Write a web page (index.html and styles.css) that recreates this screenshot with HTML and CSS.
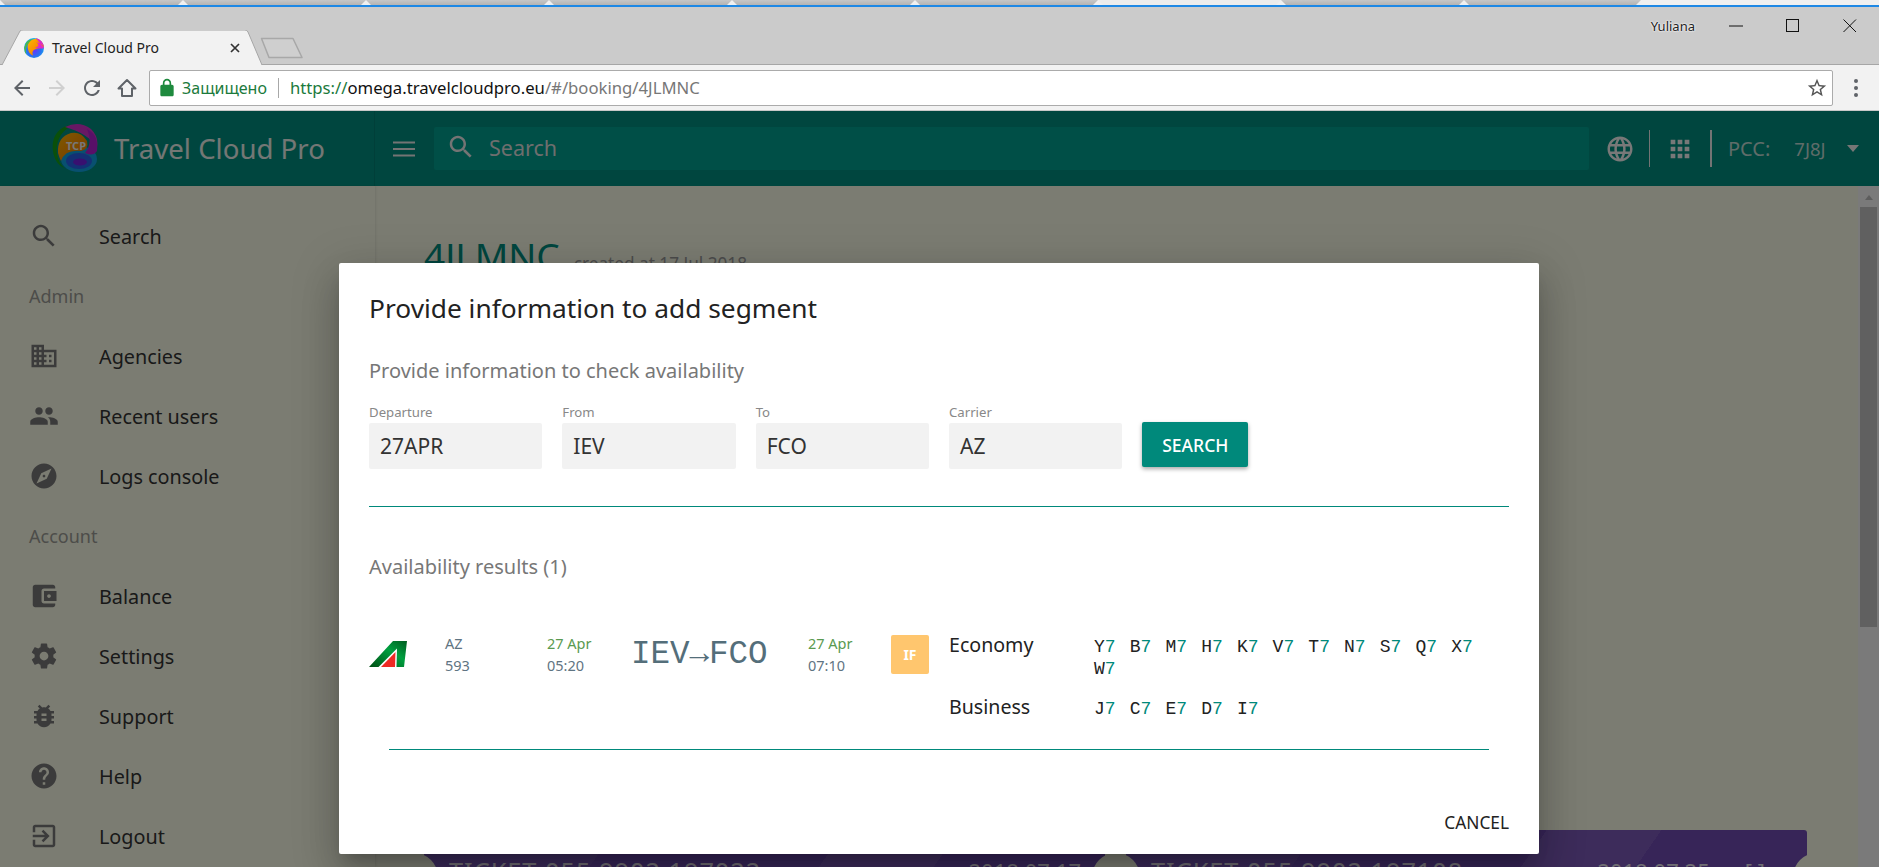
FILE: index.html
```html
<!DOCTYPE html>
<html lang="en">
<head>
<meta charset="utf-8">
<title>Travel Cloud Pro</title>
<link rel="stylesheet" href="styles.css">
</head>
<body>
<svg class="defs" width="0" height="0" aria-hidden="true">
  <defs>
    <linearGradient id="gGreen" x1="0" y1="1" x2="1" y2="0"><stop offset="0" stop-color="#004d12"/><stop offset=".6" stop-color="#00a040"/><stop offset="1" stop-color="#005c20"/></linearGradient>
    <linearGradient id="gOrange" x1="0" y1="0" x2="1" y2="1"><stop offset="0" stop-color="#ffb400"/><stop offset="1" stop-color="#f07000"/></linearGradient>
    <radialGradient id="gBlue" cx=".5" cy=".6" r=".6"><stop offset="0" stop-color="#6a30ff"/><stop offset=".55" stop-color="#2a70f0"/><stop offset="1" stop-color="#10b8f0"/></radialGradient>
  </defs>
</svg>

<div class="tabs-top">
  <span class="old-tab"></span><span class="old-tab"></span><span class="old-tab"></span><span class="old-tab"></span><span class="old-tab"></span><span class="old-tab"></span><span class="old-tab light"></span><span class="old-tab"></span><span class="old-tab last"></span>
  <span class="top-rest"></span>
</div>

<header class="titlebar">
  <div class="tab-group">
    <div class="tab">
      <svg class="tab-shape" viewBox="0 0 262 35" width="262" height="35"><path d="M0 35 L2 35 L20 1 Q21 0 23 0 L245 0 Q247 0 248 2 L262 35" fill="#f2f2f2" stroke="#a6a6a6" stroke-width="1"/></svg>
      <svg class="favicon" viewBox="0 0 24 24" width="20" height="20"><circle cx="12" cy="12" r="12" fill="url(#gBlue)"/><path d="M14 1C6 2 3 8 5 14 6 18 8 20 11 21 9 17 11 14 15 13 19 12 23 12 24 10 22 4 18 1 14 1Z" fill="url(#gOrange)"/><path d="M5 3A12 12 0 0 0 3 20C1 14 3 7 11 1Z" fill="#4cb848"/><path d="M14 0A12 12 0 0 1 24 12C23 8 20 6 15 5 19 8 17 11 13 11 19 13 22 13 24 12Z" fill="#e028c8"/></svg>
      <span class="tab-title">Travel Cloud Pro</span>
      <svg class="tab-close" viewBox="0 0 10 10" width="10" height="10"><path d="M1 1L9 9M9 1L1 9" stroke="#333" stroke-width="1.7"/></svg>
    </div>
    <svg class="newtab" viewBox="0 0 44 22" width="44" height="22"><path d="M1.500 1.500H33L42 20.500H9Z" fill="#cfcfcf" stroke="#a8a8a8" stroke-width="1.500" stroke-linejoin="round"/></svg>
  </div>
  <div class="win-group">
    <span class="win-user">Yuliana</span>
    <svg class="win-icon min" viewBox="0 0 14 14" width="14" height="14"><path d="M0 7H14" stroke="#111" stroke-width="1"/></svg>
    <svg class="win-icon max" viewBox="0 0 14 14" width="14" height="14"><rect x=".5" y=".5" width="12" height="12" fill="none" stroke="#111"/></svg>
    <svg class="win-icon close" viewBox="0 0 14 14" width="14" height="14"><path d="M.5 .5L13 13M13 .5L.5 13" stroke="#111" stroke-width="1"/></svg>
  </div>
</header>

<nav class="toolbar">
  <div class="nav-btns">
    <svg class="nav-icon" viewBox="0 0 24 24"><path d="M20 11H7.830l5.590-5.590L12 4l-8 8 8 8 1.410-1.410L7.830 13H20v-2z" fill="#5f6368"/></svg>
    <svg class="nav-icon" viewBox="0 0 24 24"><path d="M4 11h12.170l-5.590-5.590L12 4l8 8-8 8-1.410-1.410L16.170 13H4v-2z" fill="#d0d0d0"/></svg>
    <svg class="nav-icon" viewBox="0 0 24 24"><path d="M17.650 6.350C16.200 4.900 14.210 4 12 4c-4.420 0-7.990 3.580-7.990 8s3.570 8 7.990 8c3.730 0 6.840-2.550 7.730-6h-2.080c-.82 2.330-3.040 4-5.650 4-3.310 0-6-2.690-6-6s2.690-6 6-6c1.660 0 3.140.69 4.220 1.780L13 11h7V4l-2.350 2.350z" fill="#5f6368"/></svg>
    <svg class="nav-icon" viewBox="0 0 24 24"><path d="M12 4L3.500 12.500H7V20H17V12.500H20.500Z" fill="none" stroke="#5f6368" stroke-width="2" stroke-linejoin="round"/></svg>
  </div>
  <div class="omnibox">
    <svg class="lock" viewBox="0 0 24 24" width="20" height="20"><path fill-rule="evenodd" d="M18 8h-1V6c0-2.760-2.240-5-5-5S7 3.240 7 6v2H6c-1.100 0-2 .9-2 2v10c0 1.100.9 2 2 2h12c1.100 0 2-.9 2-2V10c0-1.100-.9-2-2-2zM9 8V6c0-1.660 1.340-3 3-3s3 1.340 3 3v2H9z" fill="#1e8a3e"/></svg>
    <span class="secure">Защищено</span>
    <span class="omni-sep"></span>
    <span class="url"><span class="url-green">https://</span><span class="url-host">omega.travelcloudpro.eu</span><span class="url-path">/#/booking/4JLMNC</span></span>
    <svg class="star" viewBox="0 0 24 24" width="22" height="22"><path d="M22 9.240l-7.190-.62L12 2 9.190 8.630 2 9.240l5.460 4.730L5.820 21 12 17.270 18.180 21l-1.630-7.030L22 9.240zM12 15.400l-3.760 2.270 1-4.280-3.320-2.880 4.380-.38L12 6.100l1.710 4.040 4.380.38-3.320 2.880 1 4.280L12 15.400z" fill="#555"/></svg>
  </div>
  <div class="dots"><i></i><i></i><i></i></div>
</nav>

<div class="app">
  <header class="appbar">
    <div class="brand">
      <svg class="brand-logo" viewBox="0 0 48 50" width="48" height="50">
        <path d="M20 2C6 4 0 16 2 28 3 36 7 42 13 45 6 38 4 28 7 18 10 10 15 5 22 3Z" fill="#14a014"/>
        <ellipse cx="28" cy="36" rx="18" ry="13" fill="#10a0e0"/>
        <path d="M14 4Q28-3 40 6Q48 14 46 24Q36 10 14 4Z" fill="#d030c8"/>
        <path d="M36 6Q48 12 46 28Q42 34 34 30Q42 20 36 6Z" fill="#b020d0"/>
        <path d="M7 30Q6 14 20 10Q30 8 36 18Q38 26 30 28Q14 26 10 38Q8 34 7 30Z" fill="url(#gOrange)"/>
        <ellipse cx="28" cy="38" rx="13" ry="8" fill="#2860e8"/>
        <ellipse cx="29" cy="39" rx="7" ry="3.500" fill="#7020e0"/>
        <text x="25" y="27" class="logo-text" text-anchor="middle">TCP</text>
      </svg>
      <span class="brand-name">Travel Cloud Pro</span>
    </div>
    <div class="bar-main">
      <svg class="hamburger" viewBox="0 0 22 16" width="22" height="16"><path d="M0 1.500H22M0 8H22M0 14.500H22" stroke="#e8e8e8" stroke-width="2.200"/></svg>
      <div class="bar-search">
        <svg class="icon-24 bar-search-icon" viewBox="0 0 24 24"><path d="M15.500 14h-.79l-.28-.27C15.410 12.590 16 11.110 16 9.500 16 5.910 13.090 3 9.500 3S3 5.910 3 9.500 5.910 16 9.500 16c1.610 0 3.090-.59 4.230-1.570l.27.28v.79l5 4.990L20.490 19l-4.990-5zm-6 0C7.010 14 5 11.990 5 9.500S7.010 5 9.500 5 14 7.010 14 9.500 11.990 14 9.500 14z"/></svg>
        <span class="bar-search-text">Search</span>
      </div>
      <div class="bar-tools">
        <svg class="icon-24 globe" viewBox="0 0 24 24"><path d="M11.990 2C6.470 2 2 6.480 2 12s4.470 10 9.990 10C17.520 22 22 17.520 22 12S17.520 2 11.990 2zm6.930 6h-2.950c-.32-1.250-.78-2.450-1.380-3.560 1.840.63 3.370 1.910 4.330 3.560zM12 4.040c.83 1.200 1.480 2.530 1.910 3.960h-3.820c.43-1.430 1.080-2.760 1.910-3.960zM4.260 14C4.100 13.360 4 12.690 4 12s.1-1.360.26-2h3.380c-.08.66-.14 1.320-.14 2 0 .68.06 1.340.14 2H4.260zm.82 2h2.950c.32 1.250.78 2.450 1.380 3.560-1.840-.63-3.370-1.900-4.330-3.560zm2.950-8H5.080c.96-1.660 2.490-2.930 4.330-3.560C8.810 5.550 8.350 6.750 8.030 8zM12 19.960c-.83-1.200-1.480-2.530-1.910-3.960h3.820c-.43 1.430-1.080 2.760-1.910 3.960zM14.340 14H9.660c-.09-.66-.16-1.320-.16-2 0-.68.07-1.350.16-2h4.680c.09.65.16 1.320.16 2 0 .68-.07 1.340-.16 2zm.25 5.560c.6-1.110 1.060-2.310 1.380-3.560h2.950c-.96 1.650-2.490 2.930-4.330 3.560zM16.360 14c.08-.66.14-1.320.14-2 0-.68-.06-1.340-.14-2h3.380c.16.64.26 1.310.26 2s-.1 1.360-.26 2h-3.380z"/></svg>
        <span class="tool-sep"></span>
        <svg class="icon-24 apps" viewBox="0 0 24 24"><path d="M4 8h4V4H4v4zm6 12h4v-4h-4v4zm-6 0h4v-4H4v4zm0-6h4v-4H4v4zm6 0h4v-4h-4v4zm6-10v4h4V4h-4zm-6 4h4V4h-4v4zm6 6h4v-4h-4v4zm0 6h4v-4h-4v4z"/></svg>
        <span class="tool-sep"></span>
        <span class="pcc-label">PCC:</span>
        <span class="pcc-value">7J8J</span>
        <span class="caret"></span>
      </div>
    </div>
  </header>

  <div class="app-body">
    <aside class="sidebar">
      <a class="side-item"><svg class="icon-24" viewBox="0 0 24 24"><path d="M15.500 14h-.79l-.28-.27C15.410 12.590 16 11.110 16 9.500 16 5.910 13.090 3 9.500 3S3 5.910 3 9.500 5.910 16 9.500 16c1.610 0 3.090-.59 4.230-1.570l.27.28v.79l5 4.990L20.490 19l-4.990-5zm-6 0C7.010 14 5 11.990 5 9.500S7.010 5 9.500 5 14 7.010 14 9.500 11.990 14 9.500 14z"/></svg><span>Search</span></a>
      <div class="side-head">Admin</div>
      <a class="side-item"><svg class="icon-24" viewBox="0 0 24 24"><path d="M12 7V3H2v18h20V7H12zM6 19H4v-2h2v2zm0-4H4v-2h2v2zm0-4H4V9h2v2zm0-4H4V5h2v2zm4 12H8v-2h2v2zm0-4H8v-2h2v2zm0-4H8V9h2v2zm0-4H8V5h2v2zm10 12h-8v-2h2v-2h-2v-2h2v-2h-2V9h8v10zm-2-8h-2v2h2v-2zm0 4h-2v2h2v-2z"/></svg><span>Agencies</span></a>
      <a class="side-item"><svg class="icon-24" viewBox="0 0 24 24"><path d="M16 11c1.660 0 2.990-1.340 2.990-3S17.660 5 16 5c-1.660 0-3 1.340-3 3s1.340 3 3 3zm-8 0c1.660 0 2.990-1.340 2.990-3S9.660 5 8 5C6.340 5 5 6.340 5 8s1.340 3 3 3zm0 2c-2.330 0-7 1.170-7 3.500V19h14v-2.500c0-2.330-4.670-3.500-7-3.500zm8 0c-.29 0-.62.02-.97.05 1.160.84 1.970 1.970 1.970 3.450V19h6v-2.500c0-2.330-4.670-3.500-7-3.500z"/></svg><span>Recent users</span></a>
      <a class="side-item"><svg class="icon-24" viewBox="0 0 24 24"><path d="M12 10.900c-.61 0-1.100.49-1.100 1.100s.49 1.100 1.100 1.100c.61 0 1.100-.49 1.100-1.100s-.49-1.100-1.100-1.100zM12 2C6.480 2 2 6.480 2 12s4.480 10 10 10 10-4.480 10-10S17.520 2 12 2zm2.190 12.190L6 18l3.810-8.190L18 6l-3.810 8.190z"/></svg><span>Logs console</span></a>
      <div class="side-head">Account</div>
      <a class="side-item"><svg class="icon-24" viewBox="0 0 24 24"><path d="M21 18v1c0 1.100-.9 2-2 2H5c-1.110 0-2-.9-2-2V5c0-1.100.89-2 2-2h14c1.100 0 2 .9 2 2v1h-9c-1.110 0-2 .9-2 2v8c0 1.100.89 2 2 2h9zm-9-2h10V8H12v8zm4-2.500c-.83 0-1.500-.67-1.500-1.500s.67-1.500 1.500-1.500 1.500.67 1.500 1.500-.67 1.500-1.500 1.500z"/></svg><span>Balance</span></a>
      <a class="side-item"><svg class="icon-24" viewBox="0 0 24 24"><path d="M19.430 12.980c.04-.32.07-.64.07-.98s-.03-.66-.07-.98l2.110-1.650c.19-.15.24-.42.12-.64l-2-3.460c-.12-.22-.39-.3-.61-.22l-2.490 1c-.52-.4-1.080-.73-1.690-.98l-.38-2.650C14.460 2.180 14.250 2 14 2h-4c-.25 0-.46.18-.49.42l-.38 2.650c-.61.25-1.170.59-1.690.98l-2.490-1c-.23-.09-.49 0-.61.22l-2 3.460c-.13.22-.07.49.12.64l2.110 1.650c-.04.32-.07.65-.07.98s.03.66.07.98l-2.110 1.650c-.19.15-.24.42-.12.64l2 3.460c.12.22.39.3.61.22l2.490-1c.52.4 1.080.73 1.690.98l.38 2.650c.03.24.24.42.49.42h4c.25 0 .46-.18.49-.42l.38-2.650c.61-.25 1.170-.59 1.690-.98l2.490 1c.23.09.49 0 .61-.22l2-3.460c.12-.22.07-.49-.12-.64l-2.110-1.650zM12 15.500c-1.930 0-3.500-1.570-3.500-3.500s1.570-3.500 3.500-3.500 3.500 1.570 3.500 3.500-1.570 3.500-3.500 3.500z"/></svg><span>Settings</span></a>
      <a class="side-item"><svg class="icon-24" viewBox="0 0 24 24"><path d="M20 8h-2.810c-.45-.78-1.070-1.450-1.820-1.960L17 4.410 15.590 3l-2.170 2.170C12.960 5.060 12.490 5 12 5c-.49 0-.96.06-1.410.17L8.410 3 7 4.410l1.620 1.630C7.880 6.550 7.260 7.220 6.810 8H4v2h2.090c-.05.33-.09.66-.09 1v1H4v2h2v1c0 .34.04.67.09 1H4v2h2.810c1.040 1.790 2.970 3 5.190 3s4.150-1.210 5.190-3H20v-2h-2.090c.05-.33.09-.66.09-1v-1h2v-2h-2v-1c0-.34-.04-.67-.09-1H20V8zm-6 8h-4v-2h4v2zm0-4h-4v-2h4v2z"/></svg><span>Support</span></a>
      <a class="side-item"><svg class="icon-24" viewBox="0 0 24 24"><path d="M12 2C6.480 2 2 6.480 2 12s4.480 10 10 10 10-4.480 10-10S17.520 2 12 2zm1 17h-2v-2h2v2zm2.070-7.750l-.9.92C13.450 12.900 13 13.500 13 15h-2v-.5c0-1.100.45-2.100 1.170-2.830l1.240-1.260c.37-.36.59-.86.59-1.410 0-1.100-.9-2-2-2s-2 .9-2 2H8c0-2.210 1.790-4 4-4s4 1.790 4 4c0 .88-.36 1.680-.93 2.250z"/></svg><span>Help</span></a>
      <a class="side-item"><svg class="icon-24" viewBox="0 0 24 24"><path d="M10.090 15.590L11.500 17l5-5-5-5-1.410 1.410L12.670 11H3v2h9.670l-2.580 2.590zM19 3H5c-1.110 0-2 .9-2 2v4h2V5h14v14H5v-4H3v4c0 1.100.89 2 2 2h14c1.100 0 2-.9 2-2V5c0-1.100-.9-2-2-2z"/></svg><span>Logout</span></a>
    </aside>

    <main class="content">
      <div class="booking-head">
        <h1 class="booking-id">4JLMNC</h1>
        <span class="booking-created">created at 17 Jul 2018</span>
      </div>
      <div class="tickets">
        <div class="ticket"><span class="notch"></span><span class="ticket-no">TICKET 055 9902 197022</span><span class="ticket-date">2018.07.17</span></div>
        <div class="ticket"><span class="notch"></span><span class="ticket-no">TICKET 055 9902 197108</span><span class="ticket-date">2018.07.25</span><span class="ticket-more">[ ]</span><span class="notch right"></span></div>
      </div>
    </main>

    <div class="scrollbar">
      <span class="scroll-up"></span>
      <span class="scroll-thumb"></span>
    </div>
  </div>

  <div class="backdrop"></div>

  <section class="modal">
    <h2 class="modal-title">Provide information to add segment</h2>
    <h3 class="modal-sub">Provide information to check availability</h3>
    <div class="fields">
      <div class="field"><label class="field-label">Departure</label><div class="field-input">27APR</div></div>
      <div class="field"><label class="field-label">From</label><div class="field-input">IEV</div></div>
      <div class="field"><label class="field-label">To</label><div class="field-input">FCO</div></div>
      <div class="field"><label class="field-label">Carrier</label><div class="field-input">AZ</div></div>
      <button class="btn-search">SEARCH</button>
    </div>
    <hr class="rule">
    <h3 class="modal-sub results-title">Availability results (1)</h3>
    <div class="flight">
      <div class="col-logo">
        <svg class="tail" viewBox="0 0 38 26" width="38" height="26"><path d="M0 26L24 0H38L35 26H27.500L28 7.500L9.500 26Z" fill="url(#gGreen)"/><path d="M12 26L26.500 11L26 26Z" fill="#ee2a24"/></svg>
      </div>
      <div class="col-flt"><div>AZ</div><div>593</div></div>
      <div class="col-date"><div class="date-green">27 Apr</div><div>05:20</div></div>
      <div class="col-route">IEV→FCO</div>
      <div class="col-date arrive"><div class="date-green">27 Apr</div><div>07:10</div></div>
      <div class="col-badge"><span class="badge">IF</span></div>
      <div class="classes">
        <div class="class-name">Economy</div>
        <div class="codes"><span class="code">Y<b>7</b></span><span class="code">B<b>7</b></span><span class="code">M<b>7</b></span><span class="code">H<b>7</b></span><span class="code">K<b>7</b></span><span class="code">V<b>7</b></span><span class="code">T<b>7</b></span><span class="code">N<b>7</b></span><span class="code">S<b>7</b></span><span class="code">Q<b>7</b></span><span class="code">X<b>7</b></span><span class="code">W<b>7</b></span></div>
        <div class="class-name">Business</div>
        <div class="codes"><span class="code">J<b>7</b></span><span class="code">C<b>7</b></span><span class="code">E<b>7</b></span><span class="code">D<b>7</b></span><span class="code">I<b>7</b></span></div>
      </div>
    </div>
    <hr class="rule inset">
    <div class="modal-actions"><button class="btn-cancel">CANCEL</button></div>
  </section>
</div>
</body>
</html>
```
FILE: styles.css
```css
* { box-sizing: border-box; }
html, body { margin: 0; padding: 0; height: 867px; overflow: hidden; }
body { width: 1879px; font-family: "Noto Sans", "Open Sans", sans-serif; background: #cbcbcb; }
.defs { position: absolute; }

/* Desktop strip of the window behind */
.tabs-top { display: flex; height: 7px; border-bottom: 2px solid #1e88e5; background: #f0f0f0; overflow: hidden; }
.old-tab { width: 183px; flex: none; height: 5px; background: linear-gradient(#c6c6c6, #b4b4b4); clip-path: polygon(0 0, 100% 0, calc(100% - 5px) 100%, 5px 100%); }
.old-tab.light { background: #ececec; }
.old-tab.last { width: 177px; }
.top-rest { flex: 1; }

/* Title bar */
.titlebar { height: 58px; display: flex; justify-content: space-between; background: #cbcbcb; border-bottom: 1px solid #a6a6a6; }
.tab-group { display: flex; align-items: flex-end; }
.tab { position: relative; width: 262px; height: 35px; margin-bottom: -1px; display: flex; align-items: center; padding-left: 24px; padding-right: 22px; z-index: 1; }
.tab-shape { position: absolute; left: 0; top: 0; }
.favicon, .tab-title, .tab-close { position: relative; }
.tab-title { margin-left: 8px; font-size: 14px; color: #222; flex: 1; }
.newtab { margin: 0 0 5px -2px; }
.win-group { display: flex; align-items: center; height: 38px; padding-right: 22px; }
.win-user { font-size: 13px; color: #222; text-shadow: 0 0 2px #fff, 0 0 2px #fff; margin-right: 34px; }
.win-icon { display: block; }
.win-icon.min { margin-right: 43px; }
.win-icon.max { margin-right: 43px; }

/* Toolbar */
.toolbar { height: 46px; background: #f2f2f2; display: flex; align-items: center; padding-left: 10px; border-bottom: 1px solid #c8c8c8; }
.nav-btns { display: flex; gap: 11px; width: 139px; }
.nav-icon { width: 24px; height: 24px; display: block; }
.omnibox { width: 1684px; height: 36px; background: #fff; border: 1px solid #ababab; border-radius: 2px; display: flex; align-items: center; padding-left: 7px; }
.secure { margin-left: 5px; font-size: 16px; color: #1b7a3c; }
.omni-sep { width: 1px; height: 20px; background: #a8a8a8; margin: 0 11px; }
.url { font-size: 16.700px; flex: 1; }
.url-green { color: #1b7a3c; }
.url-host { color: #111; }
.url-path { color: #777; }
.star { margin-right: 4px; }
.dots { display: flex; flex-direction: column; gap: 3px; margin-left: 21px; }
.dots i { width: 4px; height: 4px; border-radius: 50%; background: #5f6368; display: block; }

/* App */
.app { position: relative; height: 756px; background: #f6f8e4; overflow: hidden; }
.appbar { height: 75px; background: #008d7e; display: flex; }
.brand { width: 375px; flex: none; display: flex; align-items: center; padding-left: 51px; border-right: 1px solid #007f72; padding-bottom: 2px; }
.logo-text { font-size: 11px; font-weight: 700; fill: #f0f0f0; font-family: "Noto Sans", sans-serif; }
.brand-name { margin-left: 15px; font-size: 27.600px; color: #e8eeea; }
.bar-main { flex: 1; display: flex; align-items: center; padding-left: 18px; }
.hamburger { flex: none; }
.bar-search { width: 1155px; height: 43px; margin-left: 19px; background: #009e8e; border-radius: 2px; display: flex; align-items: center; padding-left: 12px; margin-top: -1px; }
.icon-24 { width: 24px; height: 24px; fill: #7c7d73; display: block; flex: none; }
.bar-search-icon { fill: #e8e8e8; width: 30px; height: 30px; margin-top: -3px; }
.bar-search-text { margin-left: 13px; margin-top: -2px; font-size: 21.500px; color: #dcdcdc; }
.bar-tools { display: flex; align-items: center; margin-left: 16px; }
.globe { fill: #f0f0f0; width: 30px; height: 30px; }
.apps { fill: #f0f0f0; width: 28px; height: 28px; }
.tool-sep { width: 2px; height: 37px; background: #e8e8e8; margin: 0 16px; }
.globe + .tool-sep { margin-left: 14px; width: 1px; margin-right: 16px; }
.pcc-label { font-size: 20px; color: #bfd8d3; }
.pcc-value { font-size: 18.500px; color: #bfd8d3; margin-left: 24px; }
.caret { width: 0; height: 0; border-left: 6px solid transparent; border-right: 6px solid transparent; border-top: 7px solid #ededed; margin-left: 21px; }

.app-body { height: 681px; display: flex; }
.sidebar { width: 375px; flex: none; padding-top: 20px; box-shadow: 1px 0 2px rgba(0,0,0,.08); }
.side-item { display: flex; align-items: center; height: 60px; padding-left: 29px; color: #333; font-size: 19.800px; }
.side-item .icon-24 { width: 30px; height: 30px; fill: #777; margin-right: 40px; }
.side-head { height: 60px; line-height: 60px; padding-left: 29px; font-size: 18px; color: #9a9a94; }

.content { flex: 1; padding: 48px 51px 0 49px; min-width: 0; }
.booking-head { display: flex; align-items: baseline; gap: 14px; height: 44px; }
.booking-id { margin: 0; font-size: 37px; font-weight: 400; line-height: 44px; color: #008d7e; }
.booking-created { font-size: 17.200px; color: #999; }
.tickets { display: flex; gap: 21px; margin-top: 552px; }
.ticket { position: relative; flex: 1; height: 120px; padding: 25px 24px 0 25px; display: flex; justify-content: space-between; border-radius: 3px; color: #e0dde6; font-size: 22px; line-height: 32px;
  background-color: #6f4bb0;
  background-image: linear-gradient(125deg, rgba(255,255,255,.06) 25%, transparent 25% 55%, rgba(255,255,255,.08) 55% 70%, transparent 70%);
}
.ticket-no { flex: 1; font-size: 25.300px; letter-spacing: 1px; }
.ticket-more { margin-left: 35px; margin-right: 18px; }
.notch { position: absolute; left: -34px; top: 23px; width: 48px; height: 48px; border-radius: 50%; background: #f6f8e4; }
.notch.right { left: auto; right: -34px; }

.scrollbar { width: 21px; flex: none; background: #f4f4f4; display: flex; flex-direction: column; align-items: center; }
.scroll-up { width: 0; height: 0; border-left: 4px solid transparent; border-right: 4px solid transparent; border-bottom: 5px solid #bbb; margin-top: 9px; }
.scroll-thumb { width: 17px; height: 420px; background: #c0c0c0; margin-top: 7px; }

.backdrop { position: absolute; inset: 0; background: rgba(0,0,0,.5); }

/* Modal */
.modal { position: absolute; left: 339px; top: 152px; width: 1200px; background: #fff; border-radius: 2px; padding: 30px 30px 19px; box-shadow: 0 11px 15px -7px rgba(0,0,0,.2), 0 24px 38px 3px rgba(0,0,0,.14), 0 9px 46px 8px rgba(0,0,0,.12); }
.modal-title { margin: 0; font-size: 26.300px; font-weight: 400; line-height: 30px; color: #222; }
.modal-sub { margin: 36px 0 0; font-size: 20px; font-weight: 400; line-height: 24px; color: #777; }
.fields { display: flex; align-items: flex-end; gap: 20px; margin-top: 21px; }
.field { width: 173.330px; }
.field-label { display: block; font-size: 13.200px; line-height: 16px; color: #888; margin-bottom: 3px; }
.field-input { height: 46px; background: #f2f2f2; border-radius: 2px; padding-left: 11px; line-height: 46px; font-size: 21px; color: #333; }
.btn-search { width: 106px; height: 45px; margin-bottom: 2px; border: 0; border-radius: 2px; background: #00897b; color: #fff; font: 500 17.500px "Noto Sans", sans-serif; box-shadow: 0 2px 4px rgba(0,0,0,.35); padding: 0; }
.rule { border: 0; height: 1px; background: #00897b; margin: 37px 0 0; }
.rule.inset { margin: 29px 20px 0; }
.results-title { margin-top: 48px; }
.flight { display: flex; align-items: flex-start; margin-top: 53px; color: #5f7482; font-size: 14.500px; line-height: 22px; }
.col-logo { width: 76px; padding-top: 9px; }
.tail { display: block; }
.col-flt { width: 102px; }
.col-date { width: 85px; }
.col-date.arrive { width: 83px; }
.date-green { color: #5a9a50; }
.col-route { width: 176px; margin-top: 5px; margin-left: -1px; margin-right: 1px; font-family: "Liberation Mono", monospace; font-size: 32.500px; line-height: 36px; color: #546e7a; }
.col-badge { width: 58px; padding-top: 3px; }
.badge { display: block; width: 38px; height: 39px; line-height: 39px; text-align: center; border-radius: 2px; background: #ffc66e; color: #fff; font-size: 14px; font-weight: 700; }
.classes { flex: 1; display: grid; grid-template-columns: 145px 1fr; row-gap: 16px; margin-top: 2px; color: #222; }
.class-name { font-size: 19.600px; line-height: 22px; }
.codes { font-family: "Liberation Mono", monospace; font-size: 18px; line-height: 22px; display: flex; flex-wrap: wrap; padding-top: 2px; }
.code { margin-right: 14.100px; }
.code b { font-weight: 400; color: #00897b; }
.modal-actions { display: flex; justify-content: flex-end; margin-top: 61px; }
.btn-cancel { border: 0; background: none; padding: 0; font: 400 17.300px/24px "Noto Sans", sans-serif; color: #222; }
```
